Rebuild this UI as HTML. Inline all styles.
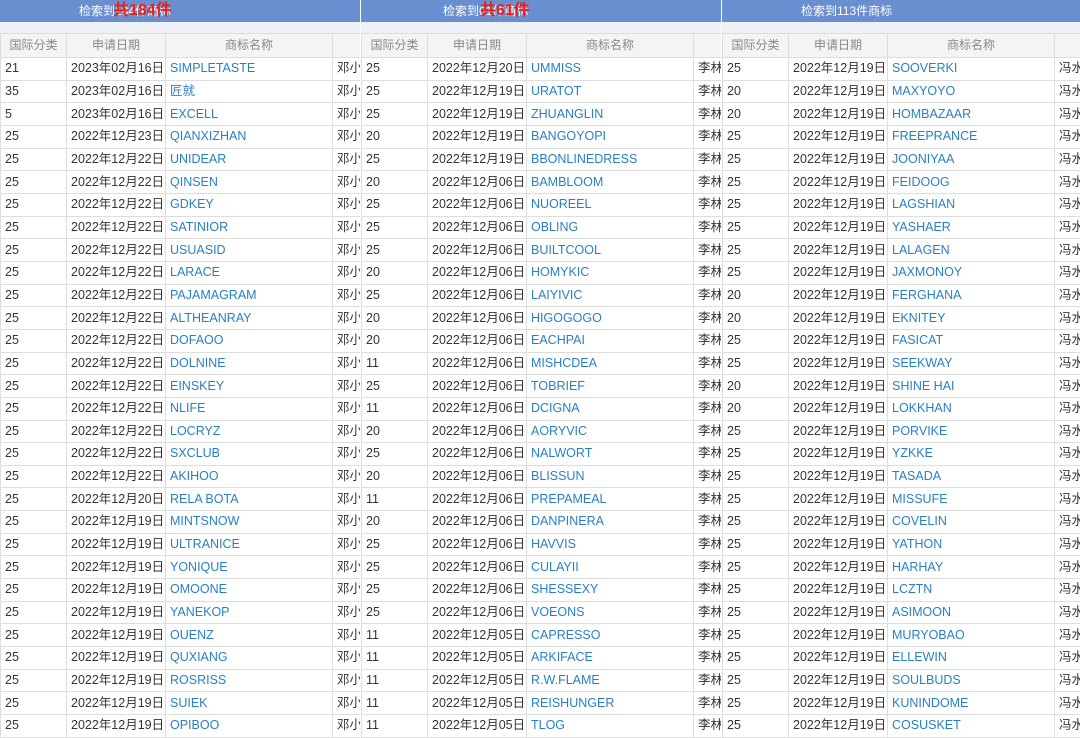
<!DOCTYPE html><html><head><meta charset="utf-8"><style>
body{margin:0;width:1080px;height:738px;overflow:hidden;background:#fff;font-family:"Liberation Sans","Noto Sans CJK SC",sans-serif;}
.p{position:absolute;top:0;width:360px;height:738px;background:#fff;overflow:hidden}
.bar{height:22px;background:#6a8fd0;color:#fff;font-size:12px;line-height:22px;position:relative}
.bar .t{position:absolute;top:0;white-space:nowrap}
.gap{height:11px;background:#eef2f7}
table{border-collapse:collapse;table-layout:fixed;font-size:12.5px}
th{height:23px;line-height:23px;padding:0;background:#f4f4f4;color:#888;font-weight:normal;border:1px solid #ddd;font-size:12px;vertical-align:middle}
td{height:21.67px;line-height:21px;border:1px solid #ddd;border-top:none;color:#333;padding:0 0 0 4px;white-space:nowrap;overflow:hidden;vertical-align:middle}
td span{display:block;height:21px;line-height:21px}
td.n{color:#2a7fc4}
.red{position:absolute;color:#e8211a;font-weight:bold;font-size:16px;top:1px;line-height:20px;white-space:nowrap}
</style></head><body>
<div id="root"></div>
<script>
const P=[
{x:0,t:"检索到184件商标",tx:79,red:"共184件",rx:113,o:"邓小",rows:`21 2023年02月16日 SIMPLETASTE
35 2023年02月16日 匠就
5 2023年02月16日 EXCELL
25 2022年12月23日 QIANXIZHAN
25 2022年12月22日 UNIDEAR
25 2022年12月22日 QINSEN
25 2022年12月22日 GDKEY
25 2022年12月22日 SATINIOR
25 2022年12月22日 USUASID
25 2022年12月22日 LARACE
25 2022年12月22日 PAJAMAGRAM
25 2022年12月22日 ALTHEANRAY
25 2022年12月22日 DOFAOO
25 2022年12月22日 DOLNINE
25 2022年12月22日 EINSKEY
25 2022年12月22日 NLIFE
25 2022年12月22日 LOCRYZ
25 2022年12月22日 SXCLUB
25 2022年12月22日 AKIHOO
25 2022年12月20日 RELA_BOTA
25 2022年12月19日 MINTSNOW
25 2022年12月19日 ULTRANICE
25 2022年12月19日 YONIQUE
25 2022年12月19日 OMOONE
25 2022年12月19日 YANEKOP
25 2022年12月19日 OUENZ
25 2022年12月19日 QUXIANG
25 2022年12月19日 ROSRISS
25 2022年12月19日 SUIEK
25 2022年12月19日 OPIBOO`},
{x:361,t:"检索到61件商标",tx:82,red:"共61件",rx:119,o:"李林",rows:`25 2022年12月20日 UMMISS
25 2022年12月19日 URATOT
25 2022年12月19日 ZHUANGLIN
20 2022年12月19日 BANGOYOPI
25 2022年12月19日 BBONLINEDRESS
20 2022年12月06日 BAMBLOOM
25 2022年12月06日 NUOREEL
25 2022年12月06日 OBLING
25 2022年12月06日 BUILTCOOL
20 2022年12月06日 HOMYKIC
25 2022年12月06日 LAIYIVIC
20 2022年12月06日 HIGOGOGO
20 2022年12月06日 EACHPAI
11 2022年12月06日 MISHCDEA
25 2022年12月06日 TOBRIEF
11 2022年12月06日 DCIGNA
20 2022年12月06日 AORYVIC
25 2022年12月06日 NALWORT
20 2022年12月06日 BLISSUN
11 2022年12月06日 PREPAMEAL
20 2022年12月06日 DANPINERA
25 2022年12月06日 HAVVIS
25 2022年12月06日 CULAYII
25 2022年12月06日 SHESSEXY
25 2022年12月06日 VOEONS
11 2022年12月05日 CAPRESSO
11 2022年12月05日 ARKIFACE
11 2022年12月05日 R.W.FLAME
11 2022年12月05日 REISHUNGER
11 2022年12月05日 TLOG`},
{x:722,t:"检索到113件商标",tx:79,red:"",o:"冯水",rows:`25 2022年12月19日 SOOVERKI
20 2022年12月19日 MAXYOYO
20 2022年12月19日 HOMBAZAAR
25 2022年12月19日 FREEPRANCE
25 2022年12月19日 JOONIYAA
25 2022年12月19日 FEIDOOG
25 2022年12月19日 LAGSHIAN
25 2022年12月19日 YASHAER
25 2022年12月19日 LALAGEN
25 2022年12月19日 JAXMONOY
20 2022年12月19日 FERGHANA
20 2022年12月19日 EKNITEY
25 2022年12月19日 FASICAT
25 2022年12月19日 SEEKWAY
20 2022年12月19日 SHINE_HAI
20 2022年12月19日 LOKKHAN
25 2022年12月19日 PORVIKE
25 2022年12月19日 YZKKE
25 2022年12月19日 TASADA
25 2022年12月19日 MISSUFE
25 2022年12月19日 COVELIN
25 2022年12月19日 YATHON
25 2022年12月19日 HARHAY
25 2022年12月19日 LCZTN
25 2022年12月19日 ASIMOON
25 2022年12月19日 MURYOBAO
25 2022年12月19日 ELLEWIN
25 2022年12月19日 SOULBUDS
25 2022年12月19日 KUNINDOME
25 2022年12月19日 COSUSKET`}];
let h="";
P.forEach(p=>{
h+=`<div class="p" style="left:${p.x}px"><div class="bar"><span class="t" style="left:${p.tx}px">${p.t}</span>${p.red?`<span class="red" style="left:${p.rx}px">${p.red}</span>`:""}</div><div class="gap"></div>
<table style="width:${p.x==0?361:362}px"><colgroup><col style="width:66px"><col style="width:99px"><col style="width:167px"><col style="width:29px"></colgroup>
<tr><th>国际分类</th><th>申请日期</th><th>商标名称</th><th></th></tr>`;
p.rows.split("\n").forEach(r=>{const a=r.split(" ");h+=`<tr><td><span>${a[0]}</span></td><td><span>${a[1]}</span></td><td class="n"><span>${a[2].replace("_"," ")}</span></td><td><span>${p.o}</span></td></tr>`;});
h+=`</table></div>`;});
document.getElementById("root").innerHTML=h;
</script></body></html>
